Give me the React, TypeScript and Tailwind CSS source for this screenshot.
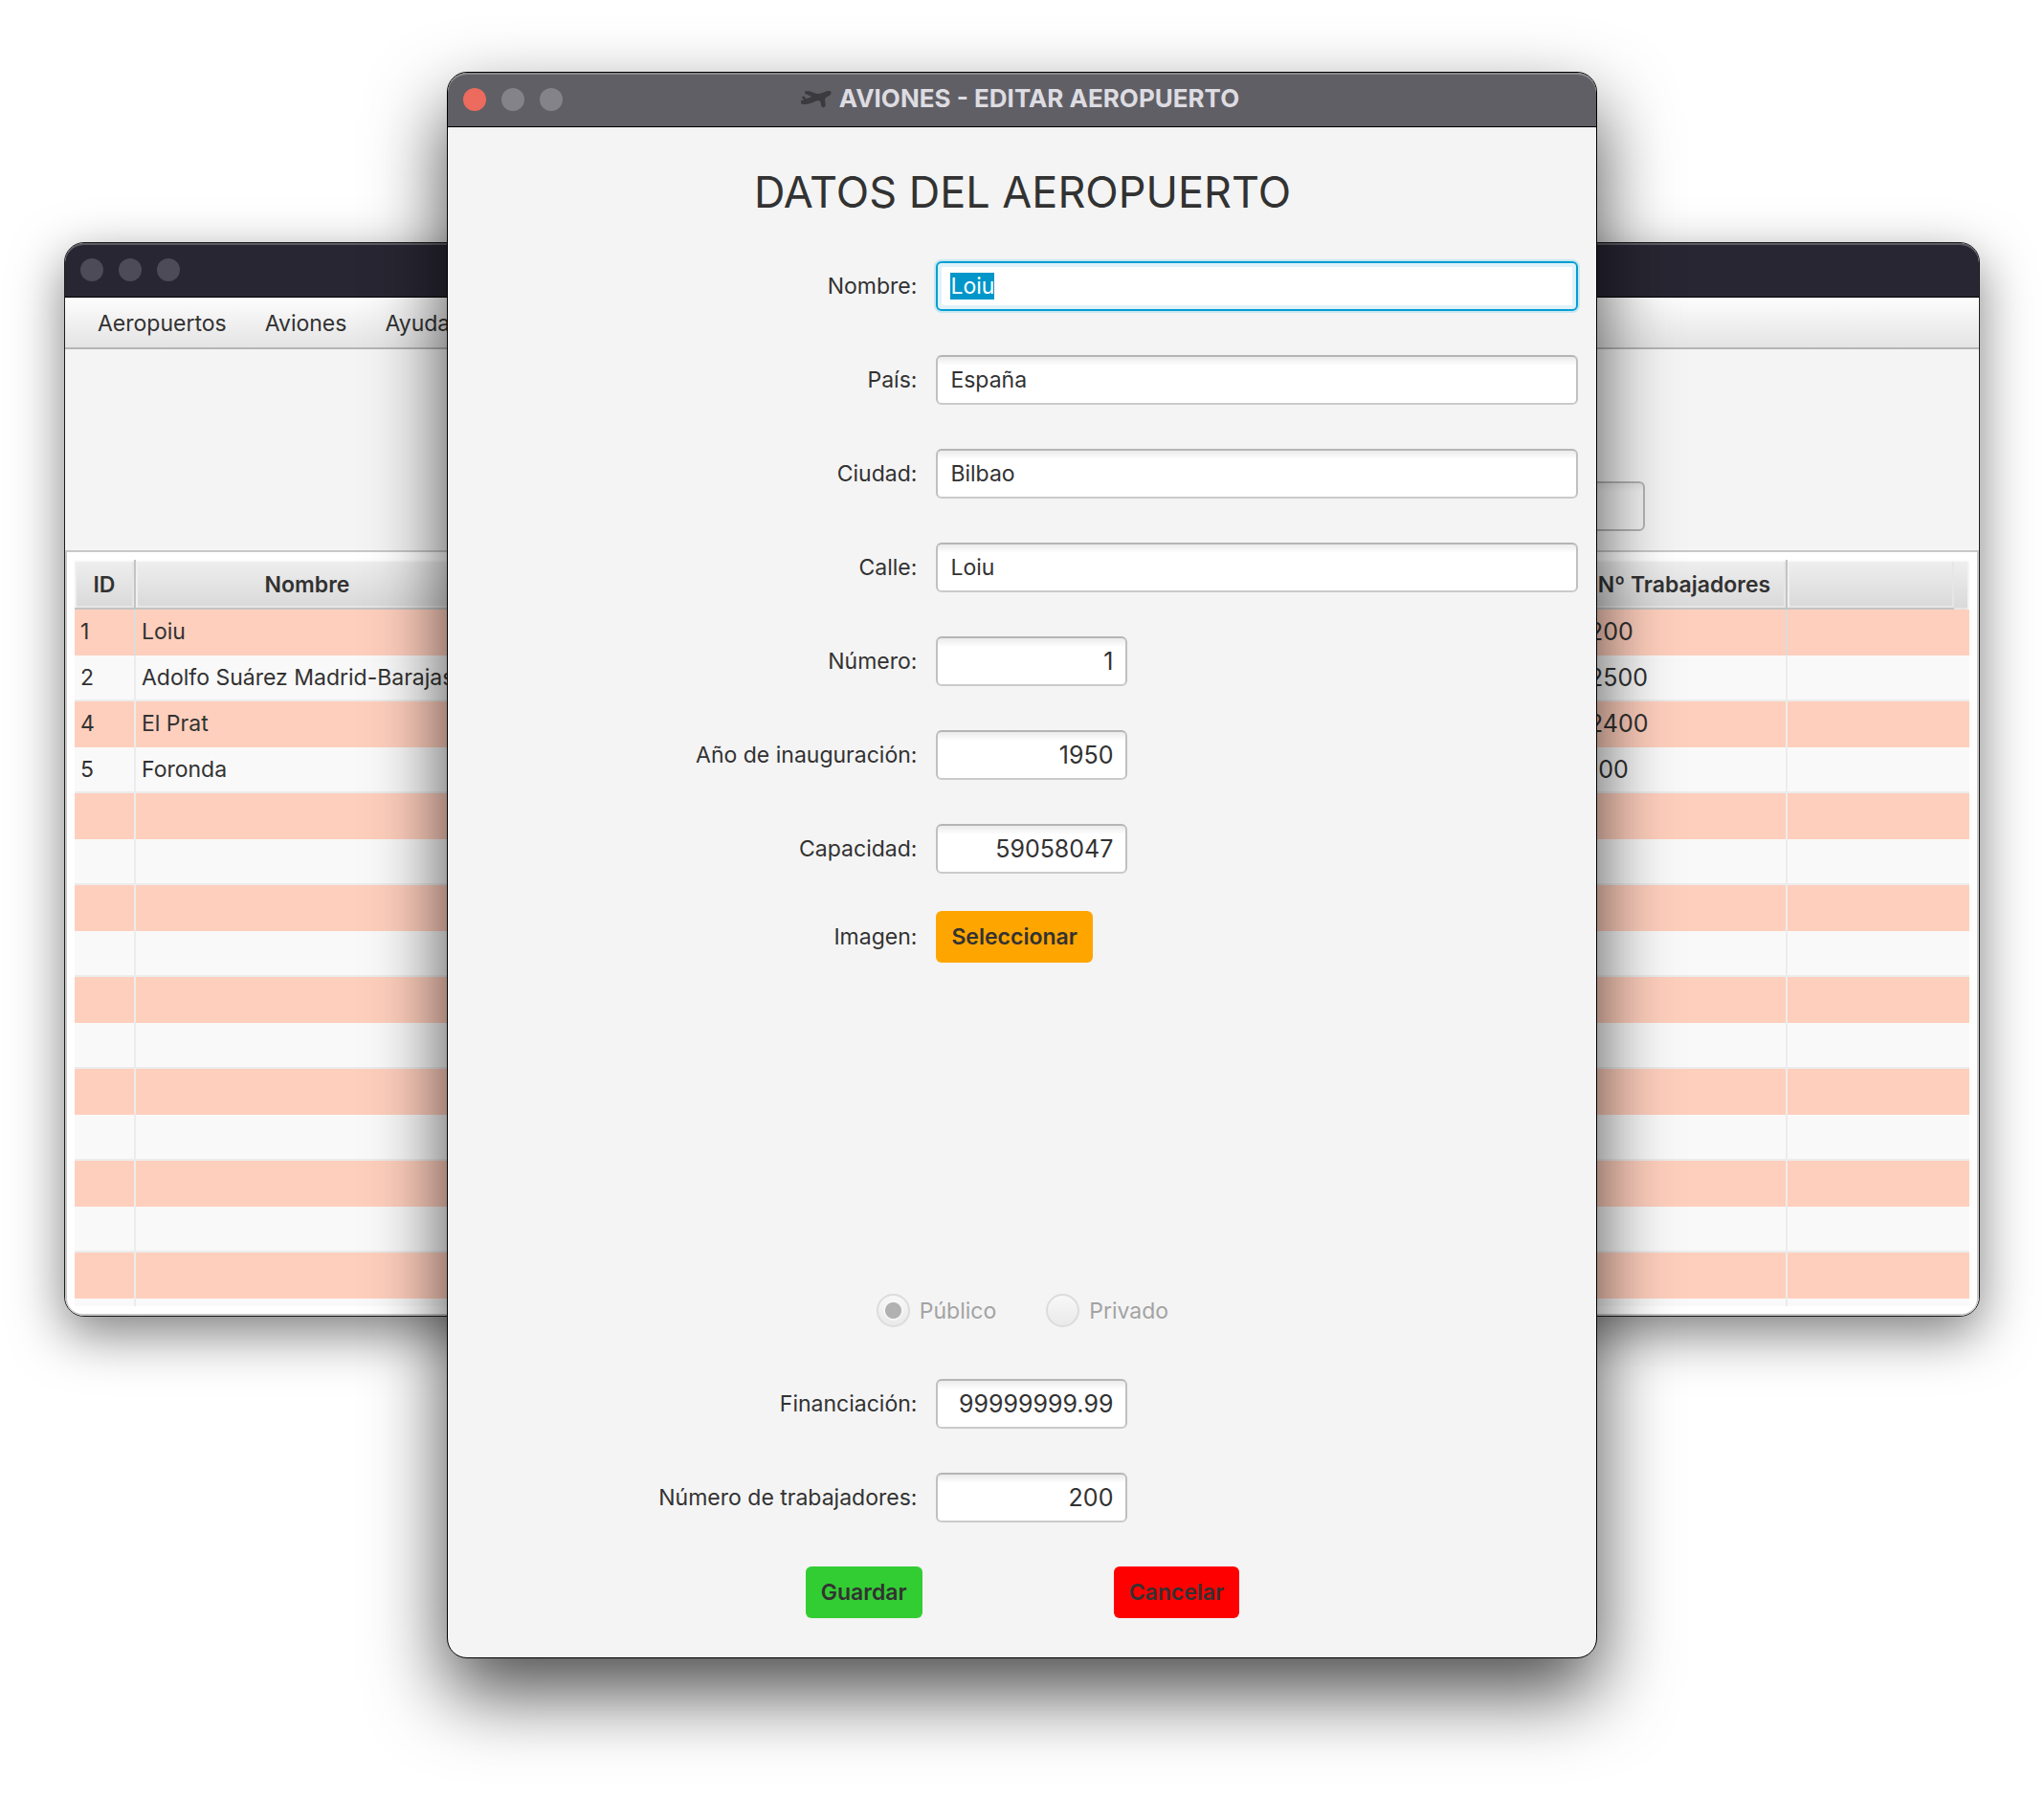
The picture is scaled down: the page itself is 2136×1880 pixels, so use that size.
import { useEffect, useRef } from "react";
import type { ReactNode } from "react";
import clsx from "clsx";

const fieldBase =
  "block h-[52px] rounded-md border-2 px-[13px] leading-[34px] text-[#323232] outline-none";
const fieldIdle =
  "border-[#c0c0c0] border-t-[#b5b5b5] border-b-[#cacaca] bg-[linear-gradient(to_bottom,#ebebeb_0px,#ffffff_9px)]";
const fieldFocused =
  "border-[#039ed3] bg-white shadow-[0_0_0_2px_#c9e7f0,inset_0_0_0_4px_#dff2f9] selection:bg-[#0096c9] selection:text-white";

function WindowDots({ colors }: { colors: string[] }) {
  return (
    <div className="flex gap-4">
      {colors.map((color, i) => (
        <span key={i} className={clsx("size-6 rounded-full", color)} />
      ))}
    </div>
  );
}

function PlaneIcon() {
  return (
    <svg viewBox="0 0 96 56" className="h-5 w-8 text-[#3b3a3f]" aria-hidden="true">
      <path
        fill="currentColor"
        d="M2 24l7-4 8 9 17-7L12 12l1-7 14 0 22 8 12-1 20-7q14-3 14 5-2 8-14 13l-6 6 2 22q-5 8-13 2l-3-17-9-2-20 8q-22 7-32 2l-1-9 11-3z"
      />
    </svg>
  );
}

function Row({ label, htmlFor, children }: { label: string; htmlFor: string; children: ReactNode }) {
  return (
    <div className="grid grid-cols-[47fr_67fr] items-center gap-5">
      <label htmlFor={htmlFor} className="text-right whitespace-nowrap">
        {label}
      </label>
      <div>{children}</div>
    </div>
  );
}

type FieldProps = { id: string; label: string; value: string; numeric?: boolean; focused?: boolean };

function Field({ id, label, value, numeric, focused }: FieldProps) {
  const ref = useRef<HTMLInputElement>(null);
  useEffect(() => {
    if (focused) {
      ref.current?.focus();
      ref.current?.select();
    }
  }, [focused]);
  return (
    <Row label={label} htmlFor={id}>
      <input
        ref={ref}
        id={id}
        type="text"
        defaultValue={value}
        className={clsx(
          fieldBase,
          numeric ? "w-[200px] text-right text-[25px]" : "w-full",
          focused ? fieldFocused : fieldIdle,
        )}
      />
    </Row>
  );
}

function Ownership({ label, checked }: { label: string; checked?: boolean }) {
  return (
    <label className="flex items-center gap-2.5 text-[#a3a3a3]">
      <input
        type="radio"
        name="ownership"
        disabled
        defaultChecked={checked}
        className="size-[35px] appearance-none rounded-full border-2 border-[#dcdcdc] bg-[linear-gradient(to_bottom,#f8f8f8,#e9e9e9)] checked:bg-[radial-gradient(circle,#b1b1b1_0,#b1b1b1_8px,#f8f8f8_9px,transparent_11px),linear-gradient(to_bottom,#f8f8f8,#e9e9e9)]"
      />
      {label}
    </label>
  );
}

const buttonBase = "h-[54px] rounded-md px-4 text-[23px] font-semibold text-[#323232]";

function EditDialog() {
  return (
    <section
      role="dialog"
      aria-label="Editar aeropuerto"
      className="z-10 mt-[75px] w-[calc(100%-934px)] min-w-[900px] self-start justify-self-center overflow-hidden rounded-[21px] border border-black bg-[#f4f4f4] shadow-[0_36px_80px_rgba(0,0,0,0.7)] [grid-area:1/1]"
    >
      <header className="grid h-[57px] grid-cols-[1fr_auto_1fr] items-center rounded-t-[20px] border-b border-black bg-[#605f65] px-4 shadow-[inset_0_2px_0_#87878b]">
        <WindowDots colors={["bg-[#ed6a5e]", "bg-[#848389]", "bg-[#848389]"]} />
        <div className="flex items-center gap-2 pr-1 pb-0.5">
          <PlaneIcon />
          <h1 className="text-[26px] leading-8 font-bold whitespace-nowrap text-[#dddce2]">
            AVIONES - EDITAR AEROPUERTO
          </h1>
        </div>
      </header>
      <form className="pt-11 pr-[19px] pb-[41px] pl-5" onSubmit={(e) => e.preventDefault()}>
        <h2 className="mb-12 text-center text-[45px] leading-[48px]">DATOS DEL AEROPUERTO</h2>
        <div className="flex flex-col gap-[46px]">
          <Field id="nombre" label="Nombre:" value="Loiu" focused />
          <Field id="pais" label="País:" value="España" />
          <Field id="ciudad" label="Ciudad:" value="Bilbao" />
          <Field id="calle" label="Calle:" value="Loiu" />
          <Field id="numero" label="Número:" value="1" numeric />
          <Field id="anio" label="Año de inauguración:" value="1950" numeric />
          <Field id="capacidad" label="Capacidad:" value="59058047" numeric />
        </div>
        <div className="mt-[39px]">
          <Row label="Imagen:" htmlFor="imagen">
            <button id="imagen" type="button" className={clsx(buttonBase, "bg-[#ffa500]")}>
              Seleccionar
            </button>
          </Row>
        </div>
        <div className="mt-[346px] flex justify-center gap-[52px]">
          <Ownership label="Público" checked />
          <Ownership label="Privado" />
        </div>
        <div className="mt-[54px] flex flex-col gap-[46px]">
          <Field id="financiacion" label="Financiación:" value="99999999.99" numeric />
          <Field id="trabajadores" label="Número de trabajadores:" value="200" numeric />
          <div className="flex justify-center gap-[200px]">
            <button type="submit" className={clsx(buttonBase, "bg-[#32cd32]")}>
              Guardar
            </button>
            <button type="button" className={clsx(buttonBase, "bg-[#ff0000]")}>
              Cancelar
            </button>
          </div>
        </div>
      </form>
    </section>
  );
}

const airports = [
  { id: "1", name: "Loiu", workers: "200" },
  { id: "2", name: "Adolfo Suárez Madrid-Barajas", workers: "2500" },
  { id: "4", name: "El Prat", workers: "2400" },
  { id: "5", name: "Foronda", workers: "100" },
];
const rows = Array.from({ length: 15 }, (_, i) => airports[i] ?? { id: "", name: "", workers: "" });

const th =
  "h-[52px] border-b-2 border-[#c4c4c4] bg-[linear-gradient(to_bottom,#efefef,#d9d9d9)] px-0 pt-0.5 pb-0 text-center align-middle font-semibold whitespace-nowrap shadow-[inset_0_2px_0_#fafafa,inset_2px_0_0_#f0f0f0,inset_-2px_-2px_0_#e6e6e6]";
const thDivided = clsx(th, "border-r-2");

function AirportTable() {
  return (
    <div className="rounded-b-[18px] border-2 border-[#c8c8c8] bg-white p-2">
      <table className="w-full table-fixed border-separate border-spacing-0">
        <colgroup>
          <col className="w-16" />
          <col className="w-[360px]" />
          <col />
          <col className="w-[214px]" />
          <col className="w-[174px]" />
          <col className="w-4" />
        </colgroup>
        <thead>
          <tr>
            <th className={thDivided}>ID</th>
            <th className={thDivided}>Nombre</th>
            <th className={thDivided} />
            <th className={thDivided}>Nº Trabajadores</th>
            <th className={th} />
            <th className="bg-[linear-gradient(to_bottom,#efefef,#d9d9d9)] shadow-[inset_0_2px_0_#fafafa,inset_-2px_0_0_#f4f4f4,inset_0_-2px_0_#e6e6e6]" />
          </tr>
        </thead>
        <tbody>
          {rows.map((row, i) => {
            const td = clsx(
              "h-12 px-1.5 pt-0 align-middle whitespace-nowrap",
              i % 2 === 0 ? "bg-[#ffcfbd] pb-0.5" : "border-b-2 border-[#ececec] bg-[#f9f9f9] pb-0",
            );
            const divided = clsx(td, "border-r-2", i === 0 ? "border-[#dcdcdc]" : "border-[#ececec]");
            return (
              <tr key={i}>
                <td className={divided}>{row.id}</td>
                <td className={divided}>{row.name}</td>
                <td className={divided} />
                <td className={clsx(divided, "text-[25px]")}>{row.workers}</td>
                <td className={td} colSpan={2} />
              </tr>
            );
          })}
          <tr>
            <td className="h-2 border-r-2 border-[#ececec] bg-[#f9f9f9] p-0" />
            <td className="border-r-2 border-[#ececec] bg-[#f9f9f9] p-0" />
            <td className="border-r-2 border-[#ececec] bg-[#f9f9f9] p-0" />
            <td className="border-r-2 border-[#ececec] bg-[#f9f9f9] p-0" />
            <td className="bg-[#f9f9f9] p-0" colSpan={2} />
          </tr>
        </tbody>
      </table>
    </div>
  );
}

function MainWindow() {
  return (
    <section className="mx-[67px] mt-[253px] self-start overflow-hidden rounded-[21px] border border-[#1c1c1c] bg-[#f4f4f4] shadow-[0_18px_54px_rgba(0,0,0,0.5)] [grid-area:1/1]">
      <header className="flex h-[57px] items-center rounded-t-[20px] border-b border-black bg-[#282632] px-4 shadow-[inset_0_2px_0_#5b5a63]">
        <WindowDots colors={["bg-[#4d4b57]", "bg-[#4d4b57]", "bg-[#4d4b57]"]} />
      </header>
      <nav className="flex h-[54px] items-center border-b-2 border-[#b5b5b5] bg-[linear-gradient(to_bottom,#fdfdfd,#e4e4e4)] px-3.5 pt-0.5">
        {["Aeropuertos", "Aviones", "Ayuda"].map((item) => (
          <button key={item} type="button" className="px-5">
            {item}
          </button>
        ))}
      </nav>
      <div className="flex h-[210px] items-end justify-end pr-[349px] pb-5">
        <input
          type="text"
          aria-label="Filtro"
          className="h-[52px] w-[300px] rounded-md border-2 border-[#b5b5b5] bg-[linear-gradient(to_bottom,#e6e6e6_0px,#f4f4f4_9px)]"
        />
      </div>
      <AirportTable />
    </section>
  );
}

export default function App() {
  return (
    <main className="grid min-h-screen overflow-hidden bg-white font-[Inter,sans-serif] text-[23px] leading-7 text-[#323232]">
      <MainWindow />
      <EditDialog />
    </main>
  );
}
